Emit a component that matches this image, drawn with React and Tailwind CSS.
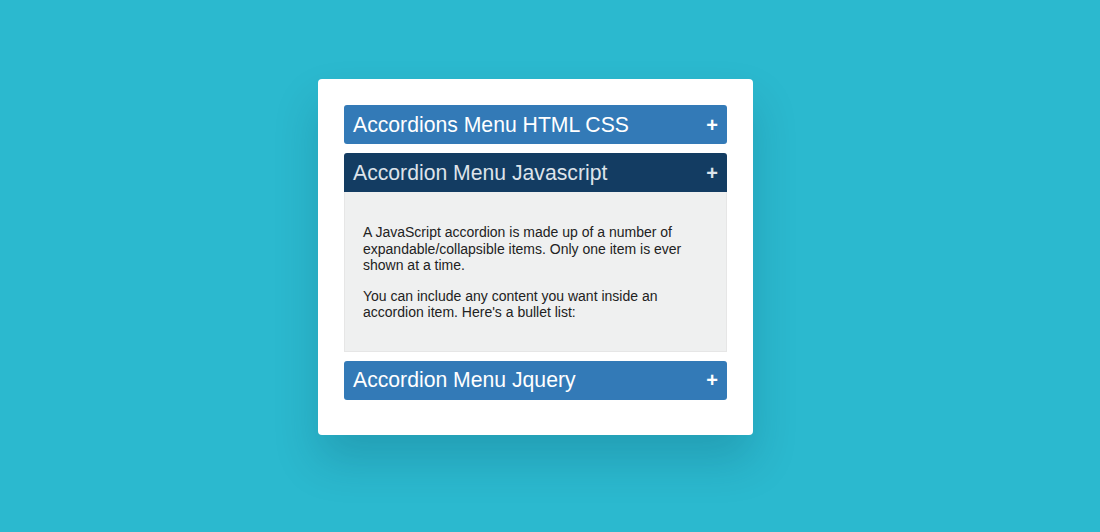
import React, { useState } from 'react';

const items = [
  { title: 'Accordions Menu HTML CSS', body: null },
  {
    title: 'Accordion Menu Javascript',
    body: [
      'A JavaScript accordion is made up of a number of expandable/collapsible items. Only one item is ever shown at a time.',
      "You can include any content you want inside an accordion item. Here's a bullet list:",
    ],
  },
  { title: 'Accordion Menu Jquery', body: null },
];

export default function App() {
  const [open, setOpen] = useState(1);

  return (
    <div className="flex min-h-[532px] justify-center bg-[#2bb9cf] pt-[79px] pr-[29px]" style={{ fontFamily: '"Liberation Sans", Arial, sans-serif' }}>
      <div className="h-fit w-[435px] rounded-[4px] bg-white px-[26px] pt-[26px] pb-[35px] shadow-[0_25px_45px_rgba(0,40,60,0.18)]">
        <div className="flex flex-col gap-[9px]">
          {items.map((item, i) => (
            <div key={item.title}>
              <button
                onClick={() => setOpen(open === i ? -1 : i)}
                className={`flex h-[39px] w-full items-center justify-between rounded-t-[3px] pl-[9px] pr-[9px] text-left text-[21.2px] ${
                  open === i ? 'bg-[#133c62] text-[#dde3ea]' : 'rounded-b-[3px] bg-[#337ab7] text-white'
                }`}
              >
                <span>{item.title}</span>
                <span className="text-[20px] font-bold leading-none">+</span>
              </button>
              {open === i && item.body && (
                <div className="border border-t-0 border-[#e6e6e6] bg-[#eff0f0] px-[18px] pt-[32px] pb-[30px] text-[14px] leading-[16.5px] text-[#222]">
                  {item.body.map((p) => (
                    <p key={p} className="mb-[14px] last:mb-0">{p}</p>
                  ))}
                </div>
              )}
            </div>
          ))}
        </div>
      </div>
    </div>
  );
}
